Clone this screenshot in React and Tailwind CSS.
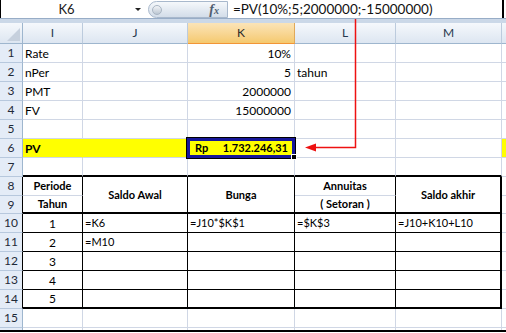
import React from 'react';

const R = {
  g: 'border-r border-r-[#d0d7e5]',
  k: 'border-r border-r-black',
  k2: 'border-r-2 border-r-black',
  y: 'border-r border-r-[#ffff00]',
  n: '',
};
const B = {
  g: 'border-b border-b-[#d0d7e5]',
  k: 'border-b border-b-black',
  k2: 'border-b-2 border-b-black',
  n: '',
};

function Cell({ r = 'g', b = 'g', className = '', children }) {
  return (
    <div className={`flex items-center pt-px overflow-hidden whitespace-nowrap ${R[r]} ${B[b]} ${className}`}>
      {children}
    </div>
  );
}

function RowHead({ n, dark }) {
  return (
    <div
      className={`flex items-center justify-center bg-[#e4ecf7] border-b border-b-[#b7c8dd] border-r ${dark ? 'border-r-black' : 'border-r-[#9eb6ce]'} text-[12px] text-[#1f2a38]`}
    >
      {n}
    </div>
  );
}

function ColHead({ label, sel, last }) {
  return (
    <div
      className={`flex items-center justify-center text-[12px] border-b ${last ? '' : 'border-r'} ${
        sel
          ? 'bg-linear-to-b from-[#fbe4b8] to-[#f5c96e] border-b-[#f29536] border-r-[#e0a95a] text-[#2a2a2a]'
          : 'bg-linear-to-b from-[#f5f8fc] to-[#dde6f1] border-b-[#9eb6ce] border-r-[#bccbdd] text-[#27384d]'
      }`}
    >
      {label}
    </div>
  );
}

const simpleRows = [
  { n: 1, i: 'Rate', k: '10%' },
  { n: 2, i: 'nPer', k: '5', l: 'tahun' },
  { n: 3, i: 'PMT', k: '2000000' },
  { n: 4, i: 'FV', k: '15000000' },
  { n: 5 },
];

const bodyRows = [
  { n: 10, p: '1', j: '=K6', k: '=J10*$K$1', l: '=$K$3', m: '=J10+K10+L10' },
  { n: 11, p: '2', j: '=M10' },
  { n: 12, p: '3' },
  { n: 13, p: '4' },
  { n: 14, p: '5' },
];

export default function App() {
  return (
    <div className="relative w-[506px] h-[333px] bg-white overflow-hidden font-['Lato',sans-serif] text-black">
      {/* formula bar */}
      <div className="flex items-center w-[504px] h-[18px] border-l border-r-2 border-black bg-white">
        <div className="w-[131px] text-center text-[13px] text-[#1a1a1a] pt-px">K6</div>
        <div className="w-[12px] flex justify-center">
          <div className="w-0 h-0 border-l-[3px] border-r-[3px] border-t-[3px] border-l-transparent border-r-transparent border-t-[#222]" />
        </div>
        <div className="ml-[4px] w-[80px] h-[17px] mt-[1px] rounded-l-full border border-[#a8b8cc] bg-linear-to-b from-[#f5f8fb] to-[#d3dde9] flex items-center">
          <div className="ml-[3px] w-[10px] h-[10px] rounded-full border border-[#a9b5c3] bg-linear-to-b from-[#f2f4f7] to-[#bcc7d3]" />
          <div className="ml-auto mr-[8px] font-['Liberation_Serif',serif] italic font-bold text-[14px] leading-none text-[#505e70]">
            f<span className="text-[10px]">x</span>
          </div>
        </div>
        <div className="pl-[5px] text-[13.5px] text-[#111] pt-px whitespace-nowrap">=PV(10%;5;2000000;-15000000)</div>
      </div>
      <div className="h-[5px] border-t border-[#98adc7] bg-[#cbd8e8]" />

      {/* sheet */}
      <div className="grid grid-cols-[23px_60px_105px_107px_101px_106px_4px] grid-rows-[21px_repeat(8,19px)_18px_repeat(6,19px)_2px] border-b-2 border-black">
        {/* column headers */}
        <div className="flex items-end justify-end pr-[2px] pb-[2px] bg-linear-to-b from-[#f5f8fc] to-[#dde6f1] border-r border-b border-r-[#9eb6ce] border-b-[#9eb6ce]">
          <div className="w-0 h-0 border-l-[13px] border-l-transparent border-b-[13px] border-b-[#c6d0dd]" />
        </div>
        <ColHead label="I" />
        <ColHead label="J" />
        <ColHead label="K" sel />
        <ColHead label="L" />
        <ColHead label="M" />
        <ColHead label="" last />

        {/* rows 1-5 */}
        {simpleRows.map((row) => (
          <React.Fragment key={row.n}>
            <RowHead n={row.n} />
            <Cell className="pl-[2px] text-[12px]">{row.i}</Cell>
            <Cell />
            <Cell className="justify-end pr-[3px] text-[12px]">{row.k}</Cell>
            <Cell className="pl-[2px] text-[12px]">{row.l}</Cell>
            <Cell />
            <Cell r="n" />
          </React.Fragment>
        ))}

        {/* row 6 */}
        <RowHead n={6} />
        <Cell r="y" className="bg-[#ffff00] pl-[2px] text-[12px] font-bold">PV</Cell>
        <Cell r="y" className="bg-[#ffff00]" />
        <div className="relative bg-[#ffff00] border-r border-b border-r-[#d0d7e5] border-b-[#d0d7e5] flex items-center justify-between pl-[7px] pr-[6px] pt-px text-[11px] font-bold">
          <span>Rp</span>
          <span>1.732.246,31</span>
          <div className="absolute -top-px -left-px -right-px -bottom-px border-[3px] border-[#17179a] shadow-[0_0_0_1px_#000]" />
          <div className="absolute -right-[3px] -bottom-[3px] w-[6px] h-[6px] bg-black border border-white" />
        </div>
        <Cell />
        <Cell />
        <Cell r="n" className="bg-[#ffff00]" />

        {/* row 7 */}
        <RowHead n={7} />
        <Cell b="k2" />
        <Cell b="k2" />
        <Cell b="k2" />
        <Cell b="k2" />
        <Cell b="k2" />
        <Cell r="n" />

        {/* rows 8-9 table header */}
        <RowHead n={8} dark />
        <Cell r="k" className="justify-center text-[11px] font-bold">Periode</Cell>
        <Cell r="k" b="k2" className="row-span-2 justify-center text-[11px] font-bold">Saldo Awal</Cell>
        <Cell r="k" b="k2" className="row-span-2 justify-center text-[11px] font-bold">Bunga</Cell>
        <Cell r="k" className="justify-center text-[11px] font-bold">Annuitas</Cell>
        <Cell r="k2" b="k2" className="row-span-2 justify-center text-[11px] font-bold">Saldo akhir</Cell>
        <Cell r="n" />
        <RowHead n={9} dark />
        <Cell r="k" b="k2" className="justify-center text-[11px] font-bold">Tahun</Cell>
        <Cell r="k" b="k2" className="justify-center text-[11px] font-bold">( Setoran )</Cell>
        <Cell r="n" />

        {/* rows 10-14 */}
        {bodyRows.map((row, idx) => {
          const b = idx === bodyRows.length - 1 ? 'k2' : 'k';
          return (
            <React.Fragment key={row.n}>
              <RowHead n={row.n} dark />
              <Cell r="k" b={b} className="justify-center text-[12px]">{row.p}</Cell>
              <Cell r="k" b={b} className="pl-[2px] text-[11px]">{row.j}</Cell>
              <Cell r="k" b={b} className="pl-[2px] text-[11px]">{row.k}</Cell>
              <Cell r="k" b={b} className="pl-[2px] text-[11px]">{row.l}</Cell>
              <Cell r="k2" b={b} className="pl-[2px] text-[11px]">{row.m}</Cell>
              <Cell r="n" />
            </React.Fragment>
          );
        })}

        {/* row 15 */}
        <RowHead n={15} />
        <Cell />
        <Cell />
        <Cell />
        <Cell />
        <Cell />
        <Cell r="n" />

        {/* row 16 (cut off) */}
        <div className="bg-[#e4ecf7] border-r border-r-[#9eb6ce]" />
        <div className="border-r border-r-[#d0d7e5]" />
        <div className="border-r border-r-[#d0d7e5]" />
        <div className="border-r border-r-[#d0d7e5]" />
        <div className="border-r border-r-[#d0d7e5]" />
        <div className="border-r border-r-[#d0d7e5]" />
        <div />
      </div>

      {/* red arrow pointing from formula bar to L6 */}
      <svg className="absolute inset-0 pointer-events-none" width="506" height="333" viewBox="0 0 506 333">
        <polyline points="355.5,19 355.5,147.5 315,147.5" fill="none" stroke="#ee1111" strokeWidth="1.5" />
        <polygon points="305,147.5 316,143.5 316,151.5" fill="#ee1111" />
      </svg>
    </div>
  );
}
